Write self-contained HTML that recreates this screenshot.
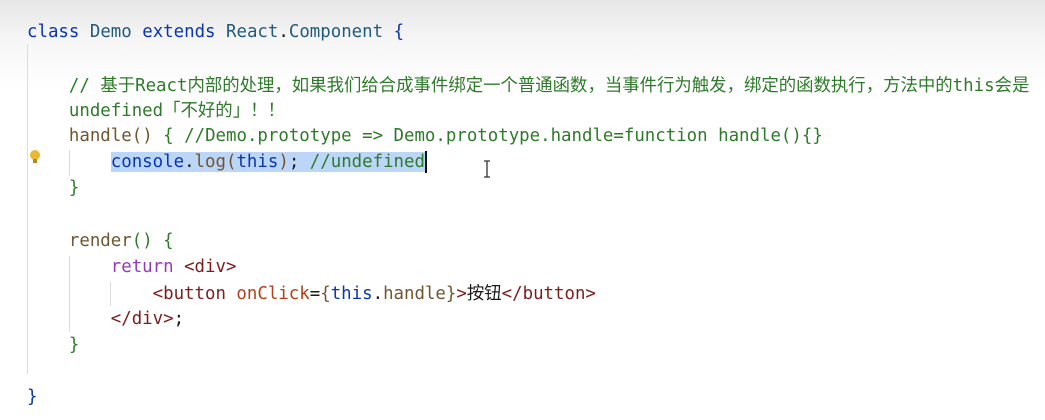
<!DOCTYPE html>
<html><head><meta charset="utf-8"><style>
html,body{margin:0;padding:0}
body{width:1045px;height:420px;overflow:hidden;position:relative;
background:linear-gradient(#e6e6e6 0px,#f6f6f6 40px,#ffffff 90px,#ffffff 100%);
font-family:"DejaVu Sans Mono","Liberation Mono","Noto Sans CJK SC",monospace;font-size:17.4px;}
.l{position:absolute;left:27px;height:26px;line-height:26px;white-space:pre;color:#1a1a1a}
.kw{color:#0b35b0}.cl{color:#215b7c}.cm{color:#2f7a2a}.fn{color:#6f5630}.gb{color:#2f7a2a}
.rt{color:#9639b5}.tg{color:#7c1d1d}.at{color:#b3401a}.cj{font-family:"Noto Sans CJK SC",sans-serif}
.sel{background:#bcd6f7}
.g{position:absolute;width:1px;background:#dcdcdc}
</style></head><body>
<div class="g" style="left:27px;top:44px;height:330px"></div>
<div class="g" style="left:69px;top:150px;height:26px"></div>
<div class="g" style="left:69px;top:256px;height:76px"></div>
<div class="g" style="left:110px;top:282px;height:24px"></div>
<div class="l" style="top:19px"><span class="kw">class</span> <span class="cl">Demo</span> <span class="kw">extends</span> <span class="cl">React</span>.<span class="cl">Component</span> <span class="kw">{</span></div>
<div class="l cm" style="top:72px">    // <span class="cj">基于</span>React<span class="cj">内部的处理，如果我们给合成事件绑定一个普通函数，当事件行为触发，绑定的函数执行，方法中的</span>this<span class="cj">会是</span></div>
<div class="l cm" style="top:97px">    undefined<span class="cj">「不好的」！！</span></div>
<div class="l" style="top:123px">    <span class="fn">handle</span><span class="fn">()</span> <span class="gb">{</span> <span class="cm">//Demo.prototype =&gt; Demo.prototype.handle=function handle(){}</span></div>
<div class="l" style="top:149px">        <span class="sel"><span class="kw">console</span>.<span class="fn">log</span><span class="fn">(</span><span class="kw">this</span><span class="fn">)</span>; <span class="cm">//undefined</span></span><span style="display:inline-block;width:2px;height:22px;background:#111;vertical-align:middle"></span></div>
<div class="l gb" style="top:175px">    }</div>
<div class="l" style="top:228px">    <span class="fn">render</span><span class="gb">()</span> <span class="gb">{</span></div>
<div class="l" style="top:254px">        <span class="rt">return</span> <span class="tg">&lt;div&gt;</span></div>
<div class="l" style="top:280px">            <span class="tg">&lt;button</span> <span class="at">onClick</span>=<span class="fn">{</span><span class="kw">this</span>.<span class="fn">handle</span><span class="fn">}</span><span class="tg">&gt;</span><span class="cj">按钮</span><span class="tg">&lt;/button&gt;</span></div>
<div class="l" style="top:306px">        <span class="tg">&lt;/div&gt;</span>;</div>
<div class="l gb" style="top:332px">    }</div>
<div class="l kw" style="top:384px">}</div>
<svg style="position:absolute;left:29px;top:149px" width="12" height="16" viewBox="0 0 12 16"><circle cx="6" cy="6" r="5" fill="#e8b830"/><rect x="4" y="10" width="4" height="4" fill="#b08a20"/></svg>
<svg style="position:absolute;left:482px;top:160px" width="10" height="18" viewBox="0 0 10 18"><path d="M2 1h6M5 1v16M2 17h6" stroke="#333" stroke-width="1.3" fill="none"/></svg>
</body></html>
